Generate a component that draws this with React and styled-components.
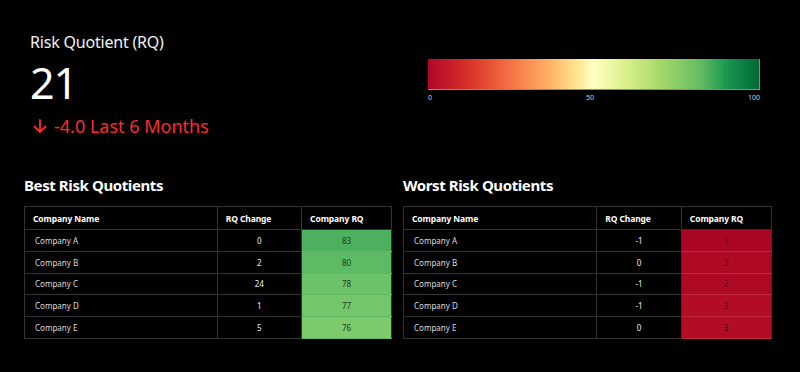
import React from "react";
import styled, { createGlobalStyle } from "styled-components";

const GlobalStyle = createGlobalStyle`
  html, body {
    margin: 0;
    padding: 0;
    background: #000;
  }
  body {
    font-family: "Noto Sans", "Open Sans", sans-serif;
    color: #fff;
  }
`;

const best = [
  { name: "Company A", change: "0", rq: 83, bg: "#4cb05e" },
  { name: "Company B", change: "2", rq: 80, bg: "#5dbb65" },
  { name: "Company C", change: "24", rq: 78, bg: "#6cc268" },
  { name: "Company D", change: "1", rq: 77, bg: "#74c66a" },
  { name: "Company E", change: "5", rq: 76, bg: "#7bca6b" },
];

const worst = [
  { name: "Company A", change: "-1", rq: 1, bg: "#a90725" },
  { name: "Company B", change: "0", rq: 2, bg: "#ae0a26" },
  { name: "Company C", change: "-1", rq: 2, bg: "#ae0a26" },
  { name: "Company D", change: "-1", rq: 3, bg: "#b20c27" },
  { name: "Company E", change: "0", rq: 3, bg: "#b20c27" },
];

function RQTable({ title, rows, good }) {
  return (
    <Section>
      <SectionTitle>{title}</SectionTitle>
      <Table>
        <colgroup>
          <col style={{ width: "52.5%" }} />
          <col style={{ width: "23%" }} />
          <col />
        </colgroup>
        <thead>
          <tr>
            <Th>Company Name</Th>
            <Th>RQ Change</Th>
            <Th>Company RQ</Th>
          </tr>
        </thead>
        <tbody>
          {rows.map((r) => (
            <tr key={r.name}>
              <NameCell>{r.name}</NameCell>
              <ChangeCell>{r.change}</ChangeCell>
              <ScoreCell $bg={r.bg} $good={good}>{r.rq}</ScoreCell>
            </tr>
          ))}
        </tbody>
      </Table>
    </Section>
  );
}

export default function App() {
  return (
    <Page>
      <GlobalStyle />
      <Header>
        <Kpi>
          <KpiLabel>Risk Quotient (RQ)</KpiLabel>
          <KpiValue>21</KpiValue>
          <Trend>
            <svg width="16" height="16" viewBox="0 0 16 16" fill="none" stroke="#ff2a2a" strokeWidth="1.8" strokeLinecap="round" strokeLinejoin="round">
              <path d="M8 2v12M2.5 8.5 8 14l5.5-5.5" />
            </svg>
            <span>-4.0 Last 6 Months</span>
          </Trend>
        </Kpi>
        <Legend>
          <Bar />
          <Ticks>
            <span>0</span>
            <span>50</span>
            <span>100</span>
          </Ticks>
        </Legend>
      </Header>
      <Tables>
        <RQTable title="Best Risk Quotients" rows={best} good />
        <RQTable title="Worst Risk Quotients" rows={worst} />
      </Tables>
    </Page>
  );
}

const Page = styled.div`
  width: 800px;
  height: 372px;
  background: #000;
  overflow: hidden;
`;

const Header = styled.div`
  display: flex;
  justify-content: space-between;
  align-items: flex-start;
  height: 175px;
`;

const Kpi = styled.div`
  display: flex;
  flex-direction: column;
  padding: 30px 0 0 30px;
`;

const KpiLabel = styled.div`
  font-size: 16px;
  letter-spacing: -0.2px;
  line-height: 24px;
  color: #f2f2f2;
`;

const KpiValue = styled.div`
  font-size: 43px;
  letter-spacing: -1px;
  line-height: 50px;
  margin-top: 4px;
  color: #fff;
`;

const Trend = styled.div`
  display: flex;
  align-items: center;
  gap: 6px;
  margin-top: 6px;
  padding-left: 2px;
  font-size: 18px;
  line-height: 24px;
  color: #ff2a2a;
`;

const Legend = styled.div`
  width: 332px;
  margin: 59px 40px 0 0;
`;

const Bar = styled.div`
  height: 30px;
  border-right: 1px solid #8a8a8a;
  border-bottom: 1px solid #8a8a8a;
  background: linear-gradient(
    to right,
    #b0062a 0%,
    #d73027 12%,
    #f46d43 24%,
    #fdae61 36%,
    #fee08b 44%,
    #ffffbf 50%,
    #d9ef8b 60%,
    #a6d96a 70%,
    #66bd63 82%,
    #1a9850 90%,
    #006837 100%
  );
`;

const Ticks = styled.div`
  display: flex;
  justify-content: space-between;
  margin-top: 3px;
  font-size: 7px;
  line-height: 9px;
  color: #d0d0d0;
`;

const Tables = styled.div`
  display: grid;
  grid-template-columns: 368px 369px;
  gap: 11px;
  padding: 0 28px 0 24px;
`;

const Section = styled.div`
  display: flex;
  flex-direction: column;
`;

const SectionTitle = styled.div`
  font-size: 15px;
  font-weight: 700;
  letter-spacing: -0.4px;
  line-height: 20px;
  margin-bottom: 11px;
  color: #fff;
`;

const Table = styled.table`
  width: 100%;
  border-collapse: collapse;
  table-layout: fixed;
  border: 1px solid #333;
`;

const Th = styled.th`
  height: 22px;
  padding: 0 8px;
  text-align: left;
  font-size: 8.5px;
  font-weight: 700;
  letter-spacing: -0.1px;
  color: #fff;
  border: 1px solid #333;
`;

const Td = styled.td`
  height: 20.8px;
  padding: 0;
  font-size: 8px;
  color: #ddd;
  border: 1px solid #333;
`;

const NameCell = styled(Td)`
  padding-left: 10px;
`;

const ChangeCell = styled(Td)`
  text-align: center;
  color: #eee;
`;

const ScoreCell = styled(Td)`
  text-align: center;
  background: ${(p) => p.$bg};
  color: ${(p) => (p.$good ? "#1f3a22" : "#5a0010")};
  border-color: ${(p) => (p.$good ? "#5cb865" : "#c02a3e")};
  border-right-color: #333;
`;
